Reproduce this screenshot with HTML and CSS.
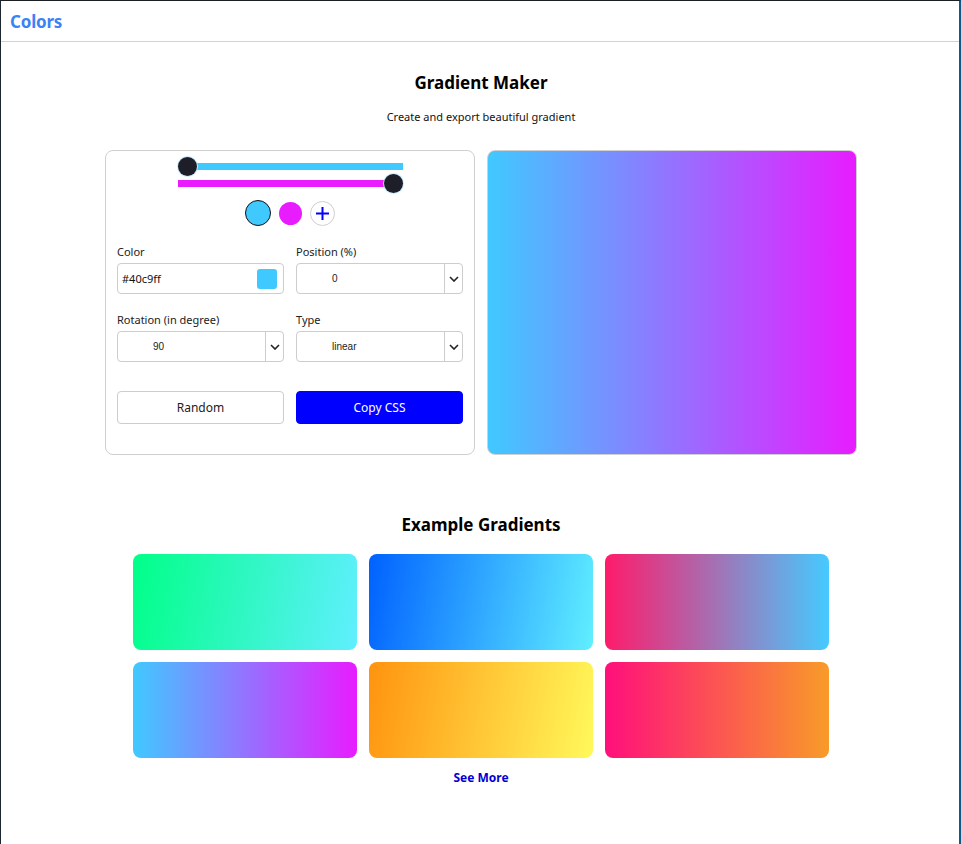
FILE: index.html
```html
<!DOCTYPE html>
<html lang="en">
<head>
<meta charset="utf-8">
<title>Colors - Gradient Maker</title>
<link rel="stylesheet" href="styles.css">
</head>
<body>
<div class="frame">
  <header class="topbar">
    <a class="brand" href="#">Colors</a>
  </header>
  <main class="main">
    <h1 class="title">Gradient Maker</h1>
    <p class="subtitle">Create and export beautiful gradient</p>

    <section class="maker">
      <div class="panel">
        <div class="sliders">
          <div class="slider-row">
            <div class="track track-cyan"><span class="thumb thumb-start"></span></div>
          </div>
          <div class="slider-row">
            <div class="track track-magenta"><span class="thumb thumb-end"></span></div>
          </div>
        </div>

        <div class="stops">
          <span class="stop stop-active"></span>
          <span class="stop stop-magenta"></span>
          <button class="add-stop" type="button" aria-label="Add color">
            <svg width="15" height="15" viewBox="0 0 15 15"><path d="M7.5 1v13M1 7.5h13" stroke="#0000ff" stroke-width="2" fill="none"/></svg>
          </button>
        </div>

        <div class="fields">
          <div class="field">
            <label class="label">Color</label>
            <div class="input color-input">
              <span class="input-text">#40c9ff</span>
              <span class="swatch"></span>
            </div>
          </div>
          <div class="field">
            <label class="label">Position (%)</label>
            <div class="input select">
              <span class="select-value">0</span>
              <span class="select-arrow"><svg width="10" height="6" viewBox="0 0 10 6"><path d="M1 1l4 4 4-4" stroke="#222" stroke-width="1.6" fill="none"/></svg></span>
            </div>
          </div>
          <div class="field">
            <label class="label">Rotation (in degree)</label>
            <div class="input select">
              <span class="select-value">90</span>
              <span class="select-arrow"><svg width="10" height="6" viewBox="0 0 10 6"><path d="M1 1l4 4 4-4" stroke="#222" stroke-width="1.6" fill="none"/></svg></span>
            </div>
          </div>
          <div class="field">
            <label class="label">Type</label>
            <div class="input select">
              <span class="select-value">linear</span>
              <span class="select-arrow"><svg width="10" height="6" viewBox="0 0 10 6"><path d="M1 1l4 4 4-4" stroke="#222" stroke-width="1.6" fill="none"/></svg></span>
            </div>
          </div>
        </div>

        <div class="actions">
          <button class="btn btn-outline" type="button">Random</button>
          <button class="btn btn-primary" type="button">Copy CSS</button>
        </div>
      </div>

      <div class="preview"></div>
    </section>

    <h2 class="section-title">Example Gradients</h2>
    <div class="examples">
      <div class="example ex-1"></div>
      <div class="example ex-2"></div>
      <div class="example ex-3"></div>
      <div class="example ex-4"></div>
      <div class="example ex-5"></div>
      <div class="example ex-6"></div>
    </div>
    <a class="see-more" href="#">See More</a>
  </main>
</div>
</body>
</html>
```

FILE: styles.css
```css
* { box-sizing: border-box; }

html, body {
  margin: 0;
  padding: 0;
  background: #ffffff;
}

body {
  font-family: "Noto Sans", "Open Sans", sans-serif;
  color: #111;
}

.frame {
  min-height: 100vh;
  border-top: 1px solid #1c1f22;
  border-left: 1px solid #1b2630;
  border-right: 2px solid #0d5a8c;
}

.topbar {
  height: 41px;
  border-bottom: 1px solid #d2d2d2;
  display: flex;
  align-items: center;
  padding-left: 9px;
}

.brand {
  color: #3b82f6;
  font-weight: 700;
  font-size: 17px;
  text-decoration: none;
  letter-spacing: -0.2px;
}

.main {
  display: flex;
  flex-direction: column;
  align-items: center;
  padding-left: 2px;
}

.title {
  margin: 29px 0 0;
  font-size: 17px;
  line-height: 24px;
  font-weight: 700;
  color: #000;
}

.subtitle {
  margin: 14px 0 0;
  font-size: 11px;
  line-height: 16px;
  color: #111;
}

.maker {
  margin-top: 25px;
  display: flex;
  gap: 12px;
}

.panel {
  width: 370px;
  height: 305px;
  border: 1px solid #cfcfcf;
  border-radius: 8px;
  padding: 7px 11px 0;
}

.sliders {
  display: flex;
  flex-direction: column;
  align-items: center;
}

.slider-row {
  height: 17px;
  padding-top: 5px;
}

.track {
  position: relative;
  width: 225px;
  height: 7px;
}

.track-cyan { background: #40c9ff; }
.track-magenta { background: #e81cff; }

.thumb {
  position: absolute;
  top: -6px;
  width: 19px;
  height: 19px;
  border-radius: 50%;
  background: #1e1e28;
  box-shadow: 0 0 0 1px #c8ecff;
}

.thumb-start { left: 0; }
.thumb-end { right: 0; }

.stops {
  margin-top: 8px;
  height: 26px;
  display: flex;
  justify-content: center;
  align-items: center;
  gap: 8px;
}

.stop {
  display: block;
  border-radius: 50%;
}

.stop-active {
  width: 26px;
  height: 26px;
  background: #40c9ff;
  border: 1px solid #111;
}

.stop-magenta {
  width: 23px;
  height: 23px;
  background: #e81cff;
}

.add-stop {
  width: 25px;
  height: 25px;
  border-radius: 50%;
  border: 1px solid #cfcfcf;
  background: #fff;
  padding: 0;
  display: flex;
  align-items: center;
  justify-content: center;
}

.fields {
  margin-top: 18px;
  display: grid;
  grid-template-columns: 1fr 1fr;
  column-gap: 12px;
  row-gap: 18px;
}

.field {
  display: flex;
  flex-direction: column;
}

.label {
  font-size: 11px;
  line-height: 16px;
  color: #222;
  margin-bottom: 3px;
}

.input {
  height: 31px;
  border: 1px solid #cdcdcd;
  border-radius: 4px;
  display: flex;
  align-items: center;
  background: #fff;
}

.color-input {
  padding: 0 6px 0 4px;
  justify-content: space-between;
}

.input-text {
  font-size: 11px;
  color: #111;
}

.swatch {
  width: 20px;
  height: 20px;
  border-radius: 3px;
  background: #40c9ff;
}

.select {
  justify-content: space-between;
}

.select-value {
  padding-left: 35px;
  font-family: "Liberation Sans", Arial, sans-serif;
  font-size: 10px;
  color: #222;
}

.select-arrow {
  width: 18px;
  height: 100%;
  border-left: 1px solid #cdcdcd;
  display: flex;
  align-items: center;
  justify-content: center;
}

.actions {
  margin-top: 29px;
  display: grid;
  grid-template-columns: 1fr 1fr;
  gap: 12px;
}

.btn {
  height: 33px;
  border-radius: 4px;
  font-family: inherit;
  font-size: 12px;
  cursor: pointer;
}

.btn-outline {
  background: #fff;
  border: 1px solid #cdcdcd;
  color: #222;
}

.btn-primary {
  background: #0000ff;
  border: 1px solid #0000ff;
  color: #fff;
}

.preview {
  width: 370px;
  height: 305px;
  border: 1px solid #d0d0d0;
  border-radius: 8px;
  background: linear-gradient(90deg, #40c9ff, #e81cff);
}

.section-title {
  margin: 58px 0 0;
  font-size: 17px;
  line-height: 24px;
  font-weight: 700;
  color: #000;
}

.examples {
  margin-top: 17px;
  display: grid;
  grid-template-columns: repeat(3, 224px);
  grid-auto-rows: 96px;
  gap: 12px;
}

.example {
  border-radius: 8px;
}

.ex-1 { background: linear-gradient(100deg, #00ff87, #60efff); }
.ex-2 { background: linear-gradient(100deg, #0061ff, #60efff); }
.ex-3 { background: linear-gradient(90deg, #ff1b6b, #45caff); }
.ex-4 { background: linear-gradient(90deg, #40c9ff, #e81cff); }
.ex-5 { background: linear-gradient(100deg, #ff930f, #fff95b); }
.ex-6 { background: linear-gradient(90deg, #ff0f7b, #f89b29); }

.see-more {
  margin-top: 12px;
  font-size: 12px;
  line-height: 16px;
  font-weight: 700;
  color: #0000d6;
  text-decoration: none;
}
```
